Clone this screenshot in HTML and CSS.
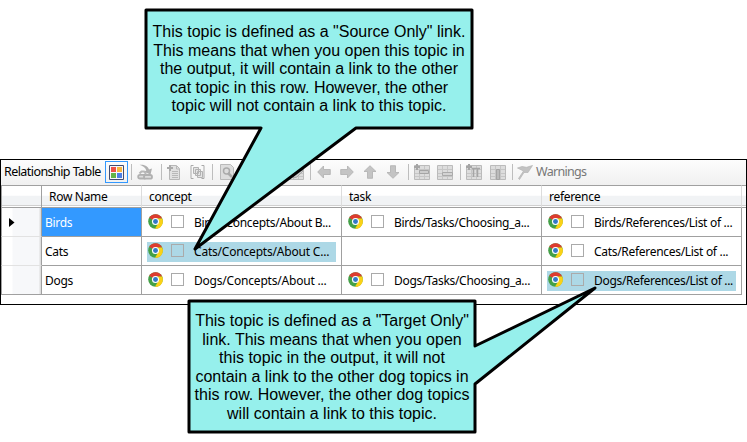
FILE: index.html
```html
<!DOCTYPE html>
<html lang="en">
<head>
<meta charset="utf-8">
<title>Relationship Table</title>
<link rel="stylesheet" href="styles.css">
</head>
<body>
<svg class="defs" width="0" height="0">
  <defs>
    <symbol id="chrome" viewBox="0 0 14 14">
      <circle cx="7" cy="7" r="6.8" fill="#43a047"/>
      <path d="M7 7L1.1 3.6A6.8 6.8 0 0 1 13.2 4.1L7 4.1Z" fill="#dd3b2f"/>
      <path d="M7 4.1H13.2A6.8 6.8 0 0 1 6.5 13.8L9.7 8.5Z" fill="#fbd116"/>
      <circle cx="7" cy="7" r="3.3" fill="#fff"/>
      <circle cx="7" cy="7" r="2.3" fill="#3478c6"/>
    </symbol>
    <symbol id="arrow" viewBox="0 0 14 14"><path d="M.7 7L6.5 1V4.5H13.3V9.5H6.5V13Z" fill="#c4c4c4" stroke="#b0b0b0" stroke-width=".8"/></symbol>
    <symbol id="sheet" viewBox="0 0 16 16"><path d="M.5 1.5H15.5V15.5H.5Z" fill="#ddd" stroke="#bbb"/><path d="M1 5.5H15M1 9.5H15M1 12.5H15M5.5 2V15M10.5 2V15" stroke="#c6c6c6"/></symbol>
  </defs>
</svg>
<main class="page">
  <section class="frame">
    <header class="toolbar">
      <span class="title">Relationship Table</span>
      <span class="toggle"><svg width="15" height="15" viewBox="0 0 15 15"><path d="M.5.5H14.5V14.5H.5Z" fill="#f6f6fb" stroke="#414c70"/><path d="M2 2H7V7H2Z" fill="#ed5147"/><path d="M8 2H13V7H8Z" fill="#f8b63d"/><path d="M2 8H7V13H2Z" fill="#62b446"/><path d="M8 8H13V13H8Z" fill="#4c7fe5"/></svg></span>
      <i class="sep s1"></i>
      <svg class="ic i1" width="16" height="16" viewBox="0 0 16 16"><path d="M2.500 .8C7 .3 11 2 12 5.500L15 4.500L13.500 10.500L7 7.800L9.300 6.500C8.500 3.500 6 2 2.500 .8Z" fill="#b0b0b0"/><rect x="1.200" y="10.800" width="8" height="3.700" rx="1.800" fill="#ddd" stroke="#b0b0b0" stroke-width="1.800"/><rect x="7" y="11" width="8" height="3.700" rx="1.800" fill="#ddd" stroke="#b0b0b0" stroke-width="1.800"/><path d="M2.500 9.500L4.500 7.500H7L9 10" fill="none" stroke="#b8b8b8" stroke-width="2"/></svg>
      <i class="sep s2"></i>
      <svg class="ic i2" width="15" height="16" viewBox="0 0 15 16"><path d="M3.500 1.500H10.500L13.500 4.500V15.500H3.500Z" fill="#e1e1e1" stroke="#b7b7b7"/><path d="M10.500 2V5H13M6 7.500H12M6 9.500H12M6 11.500H12M6 13.500H12" stroke="#b8b8b8" fill="none"/><path d="M1 4H7M4 1V7" stroke="#aaa" stroke-width="2"/></svg>
      <svg class="ic i3" width="15" height="16" viewBox="0 0 15 16"><path d="M3.500 1.500H1V14.500H3.500M11.500 1.500H14V14.500H11.500" fill="none" stroke="#aaa"/><path d="M3.500 3.500H8.500V9.500H3.500ZM5.500 5.500H10.500V11.500H5.500ZM7.500 7.500H12.500V13.500H7.500Z" fill="#e4e4e4" stroke="#b2b2b2"/></svg>
      <i class="sep s3"></i>
      <svg class="ic i4" width="15" height="16" viewBox="0 0 15 16"><path d="M.5 .5H10.500L13.500 3.500V15.500H.5Z" fill="#ddd" stroke="#b9b9b9"/><circle cx="6.500" cy="7" r="3" fill="none" stroke="#aaa" stroke-width="1.500"/><path d="M8 9L12 13" stroke="#aaa" stroke-width="2.500"/></svg>
      <svg class="ic i5" width="16" height="16" viewBox="0 0 16 16"><use href="#sheet"/><path d="M5 14L6 10L12 4L15 7L9 13Z" fill="#ccc" stroke="#aaa"/></svg>
      <i class="sep s4"></i>
      <svg class="ic a1" width="14" height="14"><use href="#arrow"/></svg>
      <svg class="ic a2 right" width="14" height="14"><use href="#arrow"/></svg>
      <svg class="ic a3 up" width="14" height="14"><use href="#arrow"/></svg>
      <svg class="ic a4 down" width="14" height="14"><use href="#arrow"/></svg>
      <i class="sep s5"></i>
      <svg class="ic t1" width="16" height="16"><use href="#sheet"/><path d="M0 3H6M3 0V6" stroke="#a5a5a5" stroke-width="2"/><path d="M5.500 6.500H14.500V9.500H5.500Z" fill="#ccc" stroke="#a5a5a5"/></svg>
      <svg class="ic t2" width="16" height="16"><use href="#sheet"/><path d="M5.500 8.500H15.500V11.500H5.500Z" fill="#d4d4d4" stroke="#aaa"/></svg>
      <i class="sep s6"></i>
      <svg class="ic t3" width="16" height="16"><use href="#sheet"/><path d="M0 3H6M3 0V6" stroke="#a5a5a5" stroke-width="2"/><path d="M6 4.500H14M7.500 5V13M11.500 5V13" stroke="#a5a5a5" stroke-width="1.500"/></svg>
      <svg class="ic t4" width="16" height="16"><use href="#sheet"/><path d="M6.500 5.500H9.500V15.500H6.500Z" fill="#bbb" stroke="#a5a5a5"/></svg>
      <i class="sep s7"></i>
      <svg class="ic fl" width="16" height="15" viewBox="0 0 16 15"><path d="M.5 3L5 1.500L9.500 2.300L15.500 .5L11 7.500L7 7.500L2.500 14.500L1.500 13.500L6.500 6Z" fill="#c2c2c2" stroke="#b4b4b4" stroke-width=".7"/></svg>
      <span class="warn">Warnings</span>
    </header>
    <div class="grid">
      <div class="hd corner"></div><div class="hd name">Row Name</div><div class="hd">concept</div><div class="hd">task</div><div class="hd">reference</div><div class="hd end"></div>

      <div class="rh"><svg width="6" height="9"><path d="M0 0L5.500 4.500L0 9Z"/></svg></div>
      <div class="name sel">Birds</div>
      <div class="cell"><div class="item"><svg class="ch"><use href="#chrome"/></svg><i class="box"></i><span>Birds/Concepts/About B...</span></div></div>
      <div class="cell"><div class="item"><svg class="ch"><use href="#chrome"/></svg><i class="box"></i><span>Birds/Tasks/Choosing_a...</span></div></div>
      <div class="cell"><div class="item"><svg class="ch"><use href="#chrome"/></svg><i class="box"></i><span>Birds/References/List of ...</span></div></div>
      <div></div>

      <div class="rh"></div>
      <div class="name">Cats</div>
      <div class="cell"><div class="item hl"><svg class="ch"><use href="#chrome"/></svg><i class="box"></i><span class="wide">Cats/Concepts/About C...</span></div></div>
      <div class="cell"></div>
      <div class="cell"><div class="item"><svg class="ch"><use href="#chrome"/></svg><i class="box"></i><span>Cats/References/List of ...</span></div></div>
      <div></div>

      <div class="rh"></div>
      <div class="name">Dogs</div>
      <div class="cell"><div class="item"><svg class="ch"><use href="#chrome"/></svg><i class="box"></i><span class="wide">Dogs/Concepts/About ...</span></div></div>
      <div class="cell"><div class="item"><svg class="ch"><use href="#chrome"/></svg><i class="box"></i><span>Dogs/Tasks/Choosing_a...</span></div></div>
      <div class="cell"><div class="item hl"><svg class="ch"><use href="#chrome"/></svg><i class="box"></i><span>Dogs/References/List of ...</span></div></div>
      <div></div>
    </div>
  </section>

  <svg class="balloons" width="747" height="442" viewBox="0 0 747 442">
    <g fill="#96f0ec" stroke="#000" stroke-width="3" stroke-linejoin="round">
      <path d="M146 10H472V128H356L195 249L261 128H146Z"/>
      <path d="M189 301H475V346L595 288L475 384V432H189Z"/>
    </g>
  </svg>
  <p class="note source">This topic is defined as a "Source Only" link.<br>This means that when you open this topic in<br>the output, it will contain a link to the other<br>cat topic in this row. However, the other<br>topic will not contain a link to this topic.</p>
  <p class="note target">This topic is defined as a "Target Only"<br>link. This means that when you open<br>this topic in the output, it will not<br>contain a link to the other dog topics in<br>this row. However, the other dog topics<br>will contain a link to this topic.</p>
</main>
</body>
</html>
```
FILE: styles.css
```css
* { box-sizing: border-box; }
body { margin: 0; background: #fff; font-family: "Noto Sans", sans-serif; }
.defs { position: absolute; }
.page { position: relative; width: 747px; height: 442px; padding-top: 159px; overflow: hidden; }
.frame { height: 146px; border: 1px solid #000; background: #fff; font-size: 12px; letter-spacing: -0.3px; color: #000; }

.toolbar { display: flex; align-items: center; height: 25px; padding: 0 0 1px 3px; background: linear-gradient(#fdfdfd, #f0f0f0); }
.toolbar > * { flex: none; }
.title { width: 101px; font-size: 12.5px; letter-spacing: -0.56px; white-space: nowrap; line-height: 24px; }
.toggle { display: flex; align-items: center; justify-content: center; width: 23px; height: 22px; border: 1px solid #3399ff; }
.sep { width: 1px; height: 16px; background: #bdbdbd; }
.s1 { margin-left: 3px; }
.i1 { margin-left: 5px; }
.s2 { margin-left: 8px; }
.i2 { margin-left: 4px; }
.i3 { margin-left: 9px; }
.s3 { margin-left: 7px; }
.i4 { margin-left: 7px; }
.i5 { margin-left: 53px; }
.s4 { margin-left: 6px; }
.a1 { margin-left: 6px; }
.a2, .a3, .a4 { margin-left: 9px; }
.right { transform: rotate(180deg); }
.up { transform: rotate(90deg); }
.down { transform: rotate(-90deg); }
.s5 { margin-left: 8px; }
.t1 { margin-left: 5px; }
.t2 { margin-left: 7px; }
.s6 { margin-left: 7px; }
.t3 { margin-left: 5px; }
.t4 { margin-left: 8px; }
.s7 { margin-left: 6px; }
.fl { margin-left: 4px; }
.warn { margin-left: 3px; font-size: 12.5px; letter-spacing: -0.7px; line-height: 24px; color: #777; }

.grid { display: grid; grid-template-columns: 41px 100px 200px 200px 200px 4px; grid-template-rows: 23px 29px 29px 29px; }
.grid > * { overflow: hidden; white-space: nowrap; }
.hd { border-top: 1px solid #a0a0a0; border-bottom: 1px solid #a0a0a0; border-right: 1px solid #dcdcdc; padding-left: 7px; line-height: 22px; background: linear-gradient(#fff 0 45%, #f1f3f5 46% 90%, #d0d0d0 91% 96%, #fff 97%); }
.hd.corner { border-left: 1px solid #a0a0a0; border-right-color: #a0a0a0; }
.hd.end { border-right: 0; padding: 0; }
.rh { display: flex; align-items: center; padding-left: 7px; border-left: 1px solid #a0a0a0; border-right: 1px solid #a0a0a0; border-bottom: 1px solid #e2e2e2; background: linear-gradient(90deg, #fff 0 10px, #f7f8fa 11px 37px, #ddd 38px 39px, #fff 39px); }
.rh:nth-last-child(6) { border-bottom-color: #a0a0a0; }
.name { padding-left: 3px; line-height: 30px; border-right: 1px solid #a0a0a0; border-bottom: 1px solid #a0a0a0; }
.hd.name { padding-left: 7px; line-height: 22px; border-right-color: #dcdcdc; }
.sel { background: #3399ff; color: #fff; }
.cell { padding: 5px 5px 0; border-right: 1px solid #a0a0a0; border-bottom: 1px solid #a0a0a0; }
.item { display: flex; align-items: center; width: 189px; height: 20px; }
.item span { margin-top: -1px; }
.item .wide { letter-spacing: -0.2px; }
.hl { background: #add8e6; }
.ch { width: 15px; height: 15px; margin: -3px 0 0 1px; }
.box { width: 13px; height: 13px; margin: -3px 10px 0 8px; border: 1px solid #aaa; }

.balloons { position: absolute; inset: 0; }
.note { position: absolute; margin: 0; text-align: center; white-space: nowrap; font: 16px/18.6px "Liberation Sans", sans-serif; color: #000; }
.source { left: 146px; top: 23px; width: 326px; }
.target { left: 189px; top: 312px; width: 286px; }
```
